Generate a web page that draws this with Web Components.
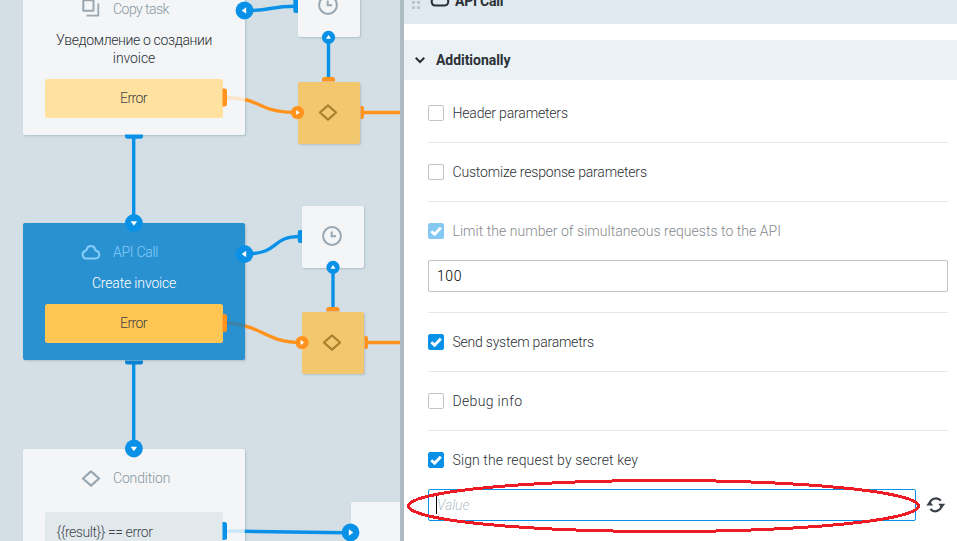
<!DOCTYPE html>
<html lang="en">
<head>
<meta charset="utf-8">
<title>API Call settings</title>
<style>
html,body{margin:0;height:100%;overflow:hidden;font-family:Roboto,"Liberation Sans",sans-serif;font-size:14px;font-weight:300;line-height:18px;color:#2b3036}
</style>
</head>
<body>
<process-editor></process-editor>
<script>
const define = (name, html, setup) => customElements.define(name, class extends HTMLElement {
  connectedCallback() {
    if (this.shadowRoot) return;
    const t = document.createElement('template');
    t.innerHTML = html;
    this.attachShadow({mode: 'open'}).appendChild(t.content.cloneNode(true));
    if (setup) setup(this, this.shadowRoot);
  }
});

// Text tracked so that its line is `w` pixels long.
define('ui-text', `<style>:host{display:inline-block;white-space:nowrap}span{display:inline-block}</style><span><slot></slot></span>`, (el, root) => {
  const span = root.querySelector('span');
  const n = el.textContent.length, w = +el.getAttribute('w');
  if (w) span.style.letterSpacing = ((w + 1.5 - span.getBoundingClientRect().width) / (n - 1)).toFixed(3) + 'px';
  if (w) el.style.width = (w + 2) + 'px';
});

const icons = {
  copy: '<path d="M2.3 1.2h10.2v10.6H2.3z" stroke-width="2" stroke-linejoin="round"/><path d="M17.3 4.5v12.1H5.5" stroke-width="1.8" stroke-linejoin="round"/>',
  cloud: '<path d="M5.3 16.6A4 4 0 0 1 4.5 8.8C5.2 8.6 5.4 8.4 5.7 7.4A4.3 4.3 0 0 1 14.1 7.4C14.4 8.4 14.7 8.6 15.4 8.8A4 4 0 0 1 14.7 16.6Z" stroke-width="2"/>',
  rhombus: '<path d="M10 3.4L18.1 10.5 10 17.6 1.9 10.5Z" stroke-width="2.2" stroke-linejoin="round"/>',
  clock: '<circle cx="10" cy="10" r="8.9" stroke-width="2"/><path d="M9.7 5.6V10.2H14" stroke-width="2"/>',
  refresh: '<path d="M3.6 9.6A6.4 6.4 0 0 1 14.8 5.6M15.6 10.4A6.4 6.4 0 0 1 4.4 14" stroke-width="2.2"/><path d="M.3 10.6L3.6 6 7.2 10.6ZM12.2 8.8H19.200L15.8 13.2Z" fill="currentColor" stroke="none"/>',
  chevron: '<path d="M5.7 7.8L10 12 14.3 7.8" stroke-width="2"/>',
  check: '<path d="M5.3 10.2L8.6 13.2 14.8 6.7" stroke-width="2.8"/>'
};
define('ui-icon', `<style>:host{display:block;width:20px;height:20px;flex:none}svg{display:block;overflow:visible}</style><svg width="20" height="20" viewBox="0 0 20 20" fill="none" stroke="currentColor"></svg>`,
  (el, root) => { root.querySelector('svg').innerHTML = icons[el.getAttribute('name')]; });

// A wide node of the process: title row, description and a port.
define('flow-node', `<style>
:host{position:absolute;left:23.3px;width:221.5px;box-sizing:border-box;padding:20px 22.2px 17px;border-radius:2px;background:#f3f5f7;box-shadow:1px 1px 2px rgba(90,120,135,.3);display:flex;flex-direction:column}
header{display:flex;align-items:center;height:18px;margin-left:35.5px;color:#8797a2;gap:12px}
header ::slotted(ui-icon){color:#98a7b1}
:host([active]){background:#2a91d1;color:#fff}
:host([active]) header{color:#86ccfa}
:host([active]) header ::slotted(ui-icon){color:#86ccfa}
.desc{margin-top:13px;text-align:center}
.port{margin-top:11.5px;height:39px;border-radius:2.5px;background:#ffe29f;display:flex;align-items:center;justify-content:center;color:#3f4242}
:host([active]) .port{background:#ffc653}
:host([rule]) .port{margin-top:25px;background:#e2e9ec;justify-content:flex-start;padding-left:11px;color:#3f464c}
:host([rule]) .desc{display:none}
</style><header><slot name="icon"></slot><slot name="title"></slot></header><div class="desc"><slot></slot></div><div class="port"><slot name="port"></slot></div>`);

define('mini-node', `<style>
:host{position:absolute;width:62px;height:62px;box-sizing:border-box;padding:0 2px 2px 0;border-radius:2px;background:#f3f5f7;color:#98a7b1;box-shadow:1px 1px 2px rgba(90,120,135,.3);display:flex;align-items:center;justify-content:center}
:host([error]){background:#f2c76e;color:#aa812d}
</style><slot></slot>`);

const pin = (x, y, dir, color, r) => {
  const a = {down: 90, left: 180, up: -90, right: 0}[dir], k = r > 7 ? 1 : .8;
  return `<circle cx="${x}" cy="${y}" r="${r}" fill="${color}"/><path transform="translate(${x} ${y}) rotate(${a}) scale(${k})" d="M-1.7-3.2L2.8 0-1.7 3.2Z" fill="#fff"/>`;
};
const B = '#0991e8', O = '#ff931e';
define('flow-wires', `<style>:host{position:absolute;inset:0}svg{display:block}</style>
<svg width="400" height="541" fill="none" stroke-width="3.4">
<g stroke="${B}">
<path d="M133.7 138V222M133.7 363V448"/>
<path d="M328.5 38V78M333 268V308"/>
<path d="M245 10.5C270 11 270 6.3 295 6.3M245 254C281 254 270 236.5 300 236.5"/>
<path d="M244.500 531.300L345 532.800"/>
<path d="M227 531.100H244.500" stroke="#cbe7f8"/>
</g>
<g stroke="${O}">
<path d="M245 99.500C263 104 266 112.500 297 112.500M245 326C265 331 272 342.500 301 342.500"/>
<path d="M364 112.500H400M368 342.500H400"/>
<path d="M226.500 97.800Q236 97.500 245 99.800" stroke="#fde5cc"/>
<path d="M226.500 323Q236 323 245 326.200" stroke="#3f83a8"/>
</g>
<g fill="${B}">
<path d="M125 134.500H143V136.500Q143 138.800 140.500 138.800H127.500Q125 138.800 125 136.500Z"/>
<path d="M125 360.500H143V362Q143 364.500 140.500 364.500H127.500Q125 364.500 125 362Z" fill="#0782d2"/>
<path d="M298 0V13H295.500Q293.300 13 293.300 10.500V0ZM302 230V243H300Q297.800 243 297.800 241V232Q297.800 230 300 230Z"/>
<path d="M222.500 522H224.500Q227 522 227 524.500V537.500Q227 540 224.500 540H222.500Z"/>
</g>
<g fill="${O}">
<path d="M222.500 88.500H224.500Q227 88.500 227 91V104Q227 106.500 224.500 106.500H222.500ZM222.500 314H224.500Q227 314 227 316.500V329.500Q227 332 224.500 332H222.500Z"/>
<path d="M322 81.500V79.500Q322 77 324.500 77H332.500Q335 77 335 79.500V81.500ZM326.300 311.500V309.500Q326.300 307 328.800 307H337Q339.500 307 339.500 309.500V311.500Z"/>
<path d="M360.500 106H362Q364 106 364 108V117Q364 119 362 119H360.500ZM364.500 336H366Q368 336 368 338V347Q368 349 366 349H364.500Z"/>
</g>
${pin(244.500,10.500,'left',B,8.9)}${pin(133.900,223,'down',B,8.9)}${pin(244.500,254,'left',B,8.9)}${pin(133.900,448.500,'down',B,8.9)}${pin(350.500,532.500,'right',B,8.9)}
${pin(328.500,37.300,'up',B,6.6)}${pin(333,267.300,'up',B,6.6)}${pin(297.500,112.500,'right',O,6.6)}${pin(302,342.500,'right',O,6.6)}
</svg>`);

define('flow-canvas', `<style>
:host{display:block;position:relative;overflow:hidden;width:400px;height:541px;background:#d3dfe5}
</style>
<flow-node style="top:-20px"><ui-icon slot="icon" name="copy"></ui-icon><ui-text slot="title" w="55">Copy task</ui-text>
<ui-text w="155">Уведомление о создании</ui-text><br><ui-text w="41">invoice</ui-text><ui-text slot="port" w="26">Error</ui-text></flow-node>
<flow-node active style="top:223px"><ui-icon slot="icon" name="cloud"></ui-icon><ui-text slot="title" w="44">API Call</ui-text>
<ui-text w="83">Create invoice</ui-text><ui-text slot="port" w="26">Error</ui-text></flow-node>
<flow-node rule style="top:449px"><ui-icon slot="icon" name="rhombus"></ui-icon><ui-text slot="title" w="56">Condition</ui-text><ui-text slot="port" w="95">{{result}} == error</ui-text></flow-node>
<mini-node style="left:297.700px;top:-25px"><ui-icon name="clock"></ui-icon></mini-node>
<mini-node error style="left:297.700px;top:81.500px"><ui-icon name="rhombus"></ui-icon></mini-node>
<mini-node style="left:302px;top:205.500px"><ui-icon name="clock"></ui-icon></mini-node>
<mini-node error style="left:302px;top:311.500px"><ui-icon name="rhombus"></ui-icon></mini-node>
<mini-node style="left:351px;top:502px"></mini-node>
<flow-wires></flow-wires>`);

define('option-row', `<style>
:host{display:block;border-bottom:1px solid #e1e7ea}
:host([last]){border:0}
.label{display:flex;align-items:center;height:58px;gap:8.5px}
.box{width:14px;height:14px;border:1px solid #bcc6ca;border-radius:2px;background:#fff;display:flex;align-items:center;justify-content:center;color:#fff;flex:none}
ui-icon{display:none}
:host([checked]) .box{background:#0991e8;border-color:#0991e8}
:host([checked]) ui-icon{display:block}
:host([disabled]) .box{background:#84c8f4;border-color:#84c8f4}
:host([disabled]) .label{color:#85898d}
</style><div class="label"><span class="box"><ui-icon name="check"></ui-icon></span><slot></slot></div><slot name="field"></slot>`);

define('text-field', `<style>
:host{display:flex;align-items:center;box-sizing:border-box;height:32px;border:1px solid #bcc6ca;border-radius:2px;padding-left:8px;color:#000;background:#fff;flex:1}
:host([focused]){border-color:#0991e8;color:#b3bfc8;font-style:italic;padding-left:7px}
i{display:none;width:1px;height:18px;background:#000;margin-top:-1px}
:host([focused]) i{display:block}
</style><i></i><slot></slot>`);

define('settings-panel', `<style>
:host{display:flex;flex-direction:column;box-sizing:border-box;height:541px;border-left:4px solid #aebbc3;background:#fff;overflow:hidden}
.bar{height:24px;background:#dfe9ef;display:flex;gap:8px;padding-left:8px;font-weight:700;flex:none}
.grip{width:8px;height:15px;margin:-4px 2px 0 0;flex:none;background:repeating-linear-gradient(90deg,#bac7d0 0 3px,transparent 3px 5px);-webkit-mask:repeating-linear-gradient(#000 0 3px,transparent 3px 5px)}
.bar ui-icon{margin-top:-11.500px}.bar ui-text{margin-top:-8px;margin-left:-3px}
.section{height:40px;margin-top:16px;background:#eaf2f6;display:flex;align-items:center;gap:6px;padding-left:6px;font-weight:700;flex:none}
.list{padding:4px 9px 0 24px}
.key{display:flex;align-items:center;gap:10px;margin-right:2px}
.limit{display:flex;margin-bottom:20px}
</style>
<div class="bar"><span class="grip"></span><ui-icon name="cloud"></ui-icon><ui-text w="47">API Call</ui-text></div>
<div class="section"><ui-icon name="chevron"></ui-icon><ui-text w="73">Additionally</ui-text></div>
<div class="list">
<option-row><ui-text w="114">Header parameters</ui-text></option-row>
<option-row><ui-text w="193">Customize response parameters</ui-text></option-row>
<option-row checked disabled><ui-text w="327">Limit the number of simultaneous requests to the API</ui-text><div class="limit" slot="field"><text-field><ui-text w="23">100</ui-text></text-field></div></option-row>
<option-row checked><ui-text w="140">Send system parametrs</ui-text></option-row>
<option-row><ui-text w="68">Debug info</ui-text></option-row>
<option-row last checked><ui-text w="184">Sign the request by secret key</ui-text><div class="key" slot="field"><text-field focused><ui-text w="31">Value</ui-text></text-field><ui-icon name="refresh" style="color:#3a4047"></ui-icon></div></option-row>
</div>`);

// Hand-drawn red ring around the secret key field.
define('red-ring', `<style>:host{position:absolute;left:406px;top:478px;pointer-events:none}svg{display:block}</style>
<svg width="516" height="57"><ellipse cx="257.500" cy="28" rx="255" ry="25.500" fill="none" stroke="#ed1c24" stroke-width="3" shape-rendering="crispEdges"/></svg>`);

define('process-editor', `<style>:host{display:grid;grid-template-columns:400px 1fr;position:relative;width:957px;height:541px;overflow:hidden}</style>
<flow-canvas></flow-canvas><settings-panel></settings-panel><red-ring></red-ring>`);
</script>
</body>
</html>
